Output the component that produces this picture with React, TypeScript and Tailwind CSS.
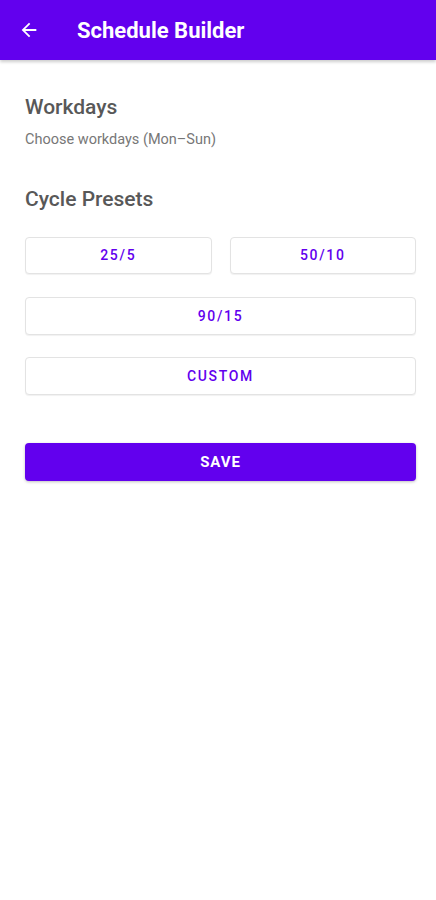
import React from "react";

export default function App() {
  const btn =
    "flex items-center justify-center rounded-[4px] border border-[#e3e3e3] bg-white text-[#6200ee] text-[14px] font-medium tracking-[0.12em] shadow-[0_1px_1px_rgba(0,0,0,0.06)]";
  return (
    <div className="w-[436px] min-h-[900px] bg-white" style={{ fontFamily: "Roboto, 'Noto Sans', sans-serif" }}>
      <div className="h-[60px] bg-[#6200ee] flex items-center shadow-[0_2px_3px_rgba(0,0,0,0.2)]">
        <div className="w-[77px] pl-[18px] flex items-center">
          <svg width="22" height="22" viewBox="0 0 24 24" fill="none">
            <path d="M20 11H7.83l5.59-5.59L12 4l-8 8 8 8 1.41-1.41L7.83 13H20v-2z" fill="#ffffff" />
          </svg>
        </div>
        <div className="text-white text-[22px] font-bold">Schedule Builder</div>
      </div>
      <div className="pl-[25px] pr-[20px] pt-[33px]">
        <div className="text-[21px] font-medium text-[#585858] leading-[28px]">Workdays</div>
        <div className="text-[14.5px] text-[#777777] mt-[10px] leading-[18px]">Choose workdays (Mon–Sun)</div>
        <div className="text-[21px] font-medium text-[#585858] leading-[28px] mt-[36px]">Cycle Presets</div>
        <div className="grid grid-cols-2 gap-[18px] mt-[24px]">
          <div className={btn + " h-[37px]"}>25/5</div>
          <div className={btn + " h-[37px]"}>50/10</div>
        </div>
        <div className={btn + " h-[38px] mt-[23px]"}>90/15</div>
        <div className={btn + " h-[38px] mt-[22px]"}>CUSTOM</div>
        <div className="h-[38px] mt-[48px] rounded-[4px] bg-[#6200ee] flex items-center justify-center text-white text-[15px] font-bold tracking-[0.06em] shadow-[0_1px_3px_rgba(0,0,0,0.25)]">
          SAVE
        </div>
      </div>
    </div>
  );
}
